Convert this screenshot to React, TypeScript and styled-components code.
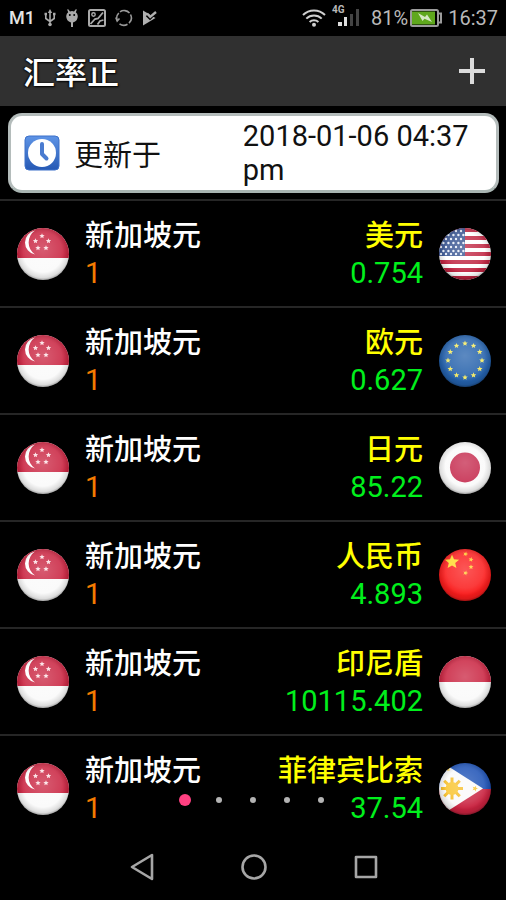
import React from "react";
import styled, { createGlobalStyle } from "styled-components";

const GlobalStyle = createGlobalStyle`
  *, *::before, *::after { box-sizing: border-box; }
  body {
    margin: 0;
    background: #000;
    color: #fff;
    font-family: Roboto, "Noto Sans CJK SC", sans-serif;
  }
`;

const Screen = styled.div`
  display: flex;
  flex-direction: column;
  min-height: 100vh;
  background: #000;
`;

const StatusBar = styled.div`
  display: flex;
  align-items: center;
  justify-content: space-between;
  height: 36px;
  padding: 0 8px 0 9px;
  font-size: 20px;
  line-height: 24px;
  color: #b9b9b9;
`;

const StatusGroup = styled.div<{ $gap: number }>`
  display: flex;
  align-items: center;
  gap: ${(p) => p.$gap}px;
`;

const Carrier = styled.span`
  font-size: 18px;
  font-weight: 500;
  color: #e4e4e4;
`;

const AppBar = styled.header`
  display: flex;
  align-items: center;
  justify-content: space-between;
  height: 70px;
  padding: 0 20px 0 23px;
  background: #303030;
`;

const Title = styled.h1`
  margin: 0 0 2px;
  font-family: "Noto Sans CJK SC", sans-serif;
  font-size: 32px;
  line-height: 48px;
  font-weight: 500;
  text-shadow: 1px 1px 2px #000, -1px 0 2px #000;
`;

const IconButton = styled.button`
  display: flex;
  align-items: center;
  justify-content: center;
  padding: 0;
  border: 0;
  background: none;
  color: #dcdcdc;
  cursor: pointer;
`;

const UpdateCard = styled.section`
  display: grid;
  grid-template-columns: 50px 2fr 3fr;
  align-items: center;
  min-height: 80px;
  margin: 7px 7px 6px 8px;
  padding: 0 0 0 13px;
  border: 3px solid #b4bcbb;
  border-bottom-color: #a9b5b2;
  border-radius: 14px;
  background: #fff;
  color: #111;
  font-size: 29px;
  line-height: 34px;
`;

const UpdateLabel = styled.span`
  font-family: "Noto Sans CJK SC", sans-serif;
`;

const Main = styled.main`
  position: relative;
  flex: 1;
`;

const RateList = styled.ul`
  margin: 0;
  padding: 0;
  list-style: none;
`;

const RateRow = styled.li`
  display: flex;
  align-items: center;
  gap: 16px;
  min-height: 107px;
  padding: 0 15px 0 17px;
  border-top: 2px solid #262626;
`;

const Amount = styled.div<{ $end?: boolean }>`
  flex: ${(p) => (p.$end ? "1 1 auto" : "0 0 auto")};
  text-align: ${(p) => (p.$end ? "right" : "left")};
`;

const Currency = styled.div<{ $color: string }>`
  margin-bottom: 2px;
  font-family: "Noto Sans CJK SC", sans-serif;
  font-size: 29px;
  line-height: 38px;
  font-weight: 500;
  color: ${(p) => p.$color};
`;

const Value = styled.div<{ $color: string }>`
  font-size: 29px;
  line-height: 39px;
  color: ${(p) => p.$color};
`;

const Pager = styled.div`
  position: absolute;
  left: 0;
  right: 0;
  bottom: 36px;
  display: flex;
  align-items: center;
  justify-content: center;
  gap: 22px;
`;

const PageDot = styled.button<{ $active?: boolean }>`
  display: flex;
  align-items: center;
  justify-content: center;
  width: 12px;
  height: 12px;
  padding: 0;
  border: 0;
  background: none;

  &::before {
    content: "";
    width: ${(p) => (p.$active ? 12 : 6)}px;
    height: ${(p) => (p.$active ? 12 : 6)}px;
    border-radius: 50%;
    background: ${(p) => (p.$active ? "#ff4081" : "#b4b4b4")};
  }
`;

const NavBar = styled.nav`
  display: flex;
  align-items: center;
  justify-content: center;
  gap: 40px;
  height: 58px;
  padding: 0 0 8px 2px;
`;

const NavButton = styled(IconButton)`
  width: 72px;
  height: 48px;
`;

type FlagCode = "sg" | "us" | "eu" | "jp" | "cn" | "id" | "ph";

function starPoints(cx: number, cy: number, r: number, turn = 0) {
  return Array.from({ length: 10 }, (_, i) => {
    const a = ((i * 36 - 90 + turn) * Math.PI) / 180;
    const d = i % 2 ? r * 0.45 : r;
    return `${(cx + d * Math.cos(a)).toFixed(2)},${(cy + d * Math.sin(a)).toFixed(2)}`;
  }).join(" ");
}

function Star({ x, y, r, fill, turn }: { x: number; y: number; r: number; fill: string; turn?: number }) {
  return <polygon points={starPoints(x, y, r, turn)} fill={fill} />;
}

const artwork: Record<FlagCode, React.ReactNode> = {
  sg: (
    <>
      <rect width="52" height="52" fill="#fafafa" />
      <rect width="52" height="30" fill="#c9223f" />
      <path d="M18 2.500A12.200 12.200 0 0 0 18 26.500A14.500 14.500 0 0 1 18 2.500Z" fill="#fff" />
      <Star x={25} y={8} r={2.8} fill="#fbdfe3" />
      <Star x={18.5} y={13} r={2.8} fill="#fbdfe3" />
      <Star x={31.5} y={13} r={2.8} fill="#fbdfe3" />
      <Star x={21} y={20} r={2.8} fill="#fbdfe3" />
      <Star x={29} y={20} r={2.8} fill="#fbdfe3" />
    </>
  ),
  us: (
    <>
      <rect width="52" height="52" fill="#fff" />
      {[0, 8, 16, 24, 32, 40, 48].map((y) => (
        <rect key={y} y={y} width="52" height="4" fill="#bf2340" />
      ))}
      <rect width="26" height="28" fill="#34518f" />
      {[3, 7, 11, 15, 19, 23, 26].map((y, r) =>
        [1, 6, 11, 16, 21].map((x) => (
          <circle key={`${x}-${y}`} cx={x + (r % 2 ? 3.4 : 1)} cy={y} r="1.200" fill="#e9eef8" />
        ))
      )}
    </>
  ),
  eu: (
    <>
      <rect width="52" height="52" fill="#2360ab" />
      {Array.from({ length: 12 }, (_, i) => {
        const a = (i * Math.PI) / 6;
        return <Star key={i} x={26 + 17 * Math.sin(a)} y={25.5 - 17 * Math.cos(a)} r={2.9} fill="#f4e95c" />;
      })}
    </>
  ),
  jp: (
    <>
      <rect width="52" height="52" fill="#fafafa" />
      <circle cx="26" cy="25.500" r="15" fill="#c4264a" />
    </>
  ),
  cn: (
    <>
      <rect width="52" height="52" fill="#fa1c1c" />
      <Star x={13} y={13} r={7.5} fill="#ffdb2b" />
      <Star x={26.5} y={5} r={2.6} fill="#ffc92b" turn={20} />
      <Star x={32} y={10.5} r={2.6} fill="#ffc92b" turn={10} />
      <Star x={32} y={18} r={2.6} fill="#ffc92b" />
      <Star x={26.5} y={24} r={2.6} fill="#ffc92b" turn={20} />
    </>
  ),
  id: (
    <>
      <rect width="52" height="52" fill="#fafafa" />
      <rect width="52" height="26" fill="#c9223f" />
    </>
  ),
  ph: (
    <>
      <rect width="52" height="26" fill="#1b50b5" />
      <rect y="26" width="52" height="26" fill="#c9223f" />
      <path d="M0 0H4L44 25.500L4 51H0Z" fill="#fafafa" />
      {Array.from({ length: 8 }, (_, i) => (
        <rect key={i} x="11.500" y="14.500" width="3" height="7" fill="#f6bd26" transform={`rotate(${i * 45} 13 25.500)`} />
      ))}
      <circle cx="13" cy="25.500" r="6.500" fill="#f9c52f" />
      <Star x={36} y={25.5} r={3} fill="#f9c52f" turn={20} />
      <Star x={9} y={6} r={2.5} fill="#f9c52f" />
    </>
  ),
};

const FlagSvg = styled.svg`
  flex: none;
  display: block;
  width: 52px;
  height: 52px;
`;

function Flag({ code, label }: { code: FlagCode; label: string }) {
  const id = React.useId();
  return (
    <FlagSvg viewBox="0 0 52 52" role="img" aria-label={label}>
      <defs>
        <clipPath id={`${id}c`}>
          <circle cx="26" cy="26" r="26" />
        </clipPath>
        <radialGradient id={`${id}s`} cx="50%" cy="47%" r="54%">
          <stop offset="0.700" stopColor="#000" stopOpacity="0" />
          <stop offset="0.900" stopColor="#000" stopOpacity="0.120" />
          <stop offset="1" stopColor="#000" stopOpacity="0.400" />
        </radialGradient>
        <radialGradient id={`${id}g`} cx="50%" cy="40%" r="50%">
          <stop offset="0" stopColor="#fff" stopOpacity="0.260" />
          <stop offset="0.700" stopColor="#fff" stopOpacity="0.140" />
          <stop offset="1" stopColor="#fff" stopOpacity="0" />
        </radialGradient>
      </defs>
      <g clipPath={`url(#${id}c)`}>
        {artwork[code]}
        <rect width="52" height="52" fill={`url(#${id}g)`} />
        <rect width="52" height="52" fill={`url(#${id}s)`} />
      </g>
    </FlagSvg>
  );
}

function ClockIcon() {
  return (
    <svg width="36" height="36" viewBox="0 0 36 36" aria-hidden="true">
      <defs>
        <linearGradient id="clock-bg" x1="0" y1="0" x2="0" y2="1">
          <stop offset="0" stopColor="#5e94e6" />
          <stop offset="1" stopColor="#2659b4" />
        </linearGradient>
      </defs>
      <rect x="1" y="1" width="34" height="34" rx="4" fill="url(#clock-bg)" stroke="#3d71c9" />
      <circle cx="18" cy="18" r="14" fill="#fff" />
      <path d="M18 9V19L22.500 23.500" fill="none" stroke="#4a7bd0" strokeWidth="4" strokeLinecap="round" strokeLinejoin="round" />
    </svg>
  );
}

function UsbIcon() {
  return (
    <svg width="12" height="18" viewBox="0 0 12 18" fill="none" stroke="#aaa" strokeWidth="1.600" aria-hidden="true">
      <path d="M6 3V16M1.800 6V9.500L6 12.500M10.200 6V9.500L6 12.500" />
      <path d="M6 0L8.200 4H3.800Z" fill="#aaa" stroke="none" />
      <circle cx="6" cy="15.500" r="1.800" fill="#aaa" stroke="none" />
      <path d="M.5 5H3M9 5H11.500" strokeWidth="2.400" />
    </svg>
  );
}

function DroidIcon() {
  return (
    <svg width="14" height="18" viewBox="0 0 14 18" aria-hidden="true">
      <path d="M3 0L5 2.400A7 7 0 0 1 9 2.400L11 0L11.800 .8L10.800 3.200Q12.500 4.500 12.800 7Q12.800 12 8 13.500V18H6V13.500Q1.200 12 1.200 7Q1.500 4.500 3.200 3.200L2.200 .8Z" fill="#aaa" />
      <circle cx="4.800" cy="6" r="1" fill="#000" />
      <circle cx="9.200" cy="6" r="1" fill="#000" />
    </svg>
  );
}

function PictureIcon() {
  return (
    <svg width="18" height="18" viewBox="0 0 18 18" fill="none" stroke="#aaa" aria-hidden="true">
      <rect x="1" y="1" width="16" height="16" rx="1.500" strokeWidth="2" />
      <circle cx="5.500" cy="5.500" r="1.700" strokeWidth="1.400" />
      <path d="M2.500 15L7 10L10 9.500L15 3.500M9.500 15.500L12 12L15.500 11" strokeWidth="1.800" />
    </svg>
  );
}

function SyncIcon() {
  return (
    <svg width="18" height="18" viewBox="0 0 18 18" fill="none" stroke="#999" strokeWidth="1.600" aria-hidden="true">
      <path d="M5 2.800A7.300 7.300 0 0 1 14.500 4M15.500 5.500A7.300 7.300 0 0 1 14 14.200M12.500 15.300A7.300 7.300 0 0 1 4.500 14.800M2.200 11.500A7.300 7.300 0 0 1 3.800 4" />
      <path d="M.8 8.500L2.200 12L4.500 9.500" />
    </svg>
  );
}

function PlayIcon() {
  return (
    <svg width="15" height="16" viewBox="0 0 15 16" aria-hidden="true">
      <path d="M1 .5L13.500 8L1 15.500Z" fill="#b0b0b0" />
      <path d="M5 5L8 8L14 2" fill="none" stroke="#000" strokeWidth="3.200" />
      <path d="M5 3.500L8.200 6.800L14 2" fill="none" stroke="#b0b0b0" strokeWidth="2.400" />
    </svg>
  );
}

function WifiIcon() {
  return (
    <svg width="24" height="18" viewBox="0 0 24 18" fill="none" stroke="#d0d0d0" strokeWidth="2" aria-hidden="true">
      <path d="M1 6A15.500 15.500 0 0 1 23 6M4.300 9.600A11 11 0 0 1 19.700 9.600M7.600 13A6.500 6.500 0 0 1 16.400 13" />
      <circle cx="12" cy="15.800" r="2" fill="#d0d0d0" stroke="none" />
    </svg>
  );
}

const Signal = styled.span`
  display: flex;
  align-items: flex-end;
  width: 27px;
  height: 22px;
  margin: 0 6px 4px 0;
`;

const Network = styled.span`
  align-self: flex-start;
  width: 6px;
  font-size: 10px;
  line-height: 10px;
  font-weight: 700;
  white-space: nowrap;
`;

function SignalIcon() {
  return (
    <Signal>
      <Network>4G</Network>
      <svg width="21" height="18" viewBox="0 0 21 18" aria-hidden="true">
        <rect x="0" y="13" width="4" height="4" fill="#ddd" />
        <rect x="6" y="8" width="3" height="9" fill="#ddd" />
        <rect x="12" y="5" width="3" height="12" fill="#444" />
        <rect x="18" y="0" width="3" height="17" fill="#444" />
      </svg>
    </Signal>
  );
}

function BatteryIcon() {
  return (
    <svg width="32" height="18" viewBox="0 0 32 18" aria-hidden="true">
      <rect x="1" y="1" width="27" height="16" rx="1.500" fill="#000" stroke="#9c9c9c" strokeWidth="2" />
      <rect x="2" y="2.500" width="23" height="13" fill="#5fa81d" />
      <path d="M28 4.500H31V13.500H28" fill="none" stroke="#9c9c9c" strokeWidth="2" />
      <path d="M8 4L15 8L17 5.500L22 13L14.500 9.800L12.500 12Z" fill="#d5e8c4" />
    </svg>
  );
}

const rates: { code: FlagCode; name: string; value: string }[] = [
  { code: "us", name: "美元", value: "0.754" },
  { code: "eu", name: "欧元", value: "0.627" },
  { code: "jp", name: "日元", value: "85.22" },
  { code: "cn", name: "人民币", value: "4.893" },
  { code: "id", name: "印尼盾", value: "10115.402" },
  { code: "ph", name: "菲律宾比索", value: "37.54" },
];

export default function App() {
  return (
    <Screen lang="zh-CN">
      <GlobalStyle />
      <StatusBar>
        <StatusGroup $gap={9}>
          <Carrier>M1</Carrier>
          <UsbIcon />
          <DroidIcon />
          <PictureIcon />
          <SyncIcon />
          <PlayIcon />
        </StatusGroup>
        <StatusGroup $gap={6}>
          <WifiIcon />
          <SignalIcon />
          <StatusGroup $gap={2}>
            <span>81%</span>
            <BatteryIcon />
          </StatusGroup>
          <span>16:37</span>
        </StatusGroup>
      </StatusBar>

      <AppBar>
        <Title>汇率正</Title>
        <IconButton type="button" aria-label="添加">
          <svg width="28" height="28" viewBox="0 0 28 28" stroke="currentColor" strokeWidth="4" aria-hidden="true">
            <path d="M14 1V27M1 14H27" />
          </svg>
        </IconButton>
      </AppBar>

      <UpdateCard>
        <ClockIcon />
        <UpdateLabel>更新于</UpdateLabel>
        <time dateTime="2018-01-06T16:37">2018-01-06 04:37 pm</time>
      </UpdateCard>

      <Main>
        <RateList>
          {rates.map((rate) => (
            <RateRow key={rate.code}>
              <Flag code="sg" label="新加坡" />
              <Amount>
                <Currency $color="#fff">新加坡元</Currency>
                <Value $color="#f57c00">1</Value>
              </Amount>
              <Amount $end>
                <Currency $color="#ffff00">{rate.name}</Currency>
                <Value $color="#00f01c">{rate.value}</Value>
              </Amount>
              <Flag code={rate.code} label={rate.name} />
            </RateRow>
          ))}
        </RateList>
        <Pager>
          {[1, 2, 3, 4, 5].map((page) => (
            <PageDot key={page} type="button" $active={page === 1} aria-label={`第${page}页`} />
          ))}
        </Pager>
      </Main>

      <NavBar>
        <NavButton type="button" aria-label="返回">
          <svg width="28" height="28" viewBox="0 0 28 28" fill="none" stroke="#a6a6a6" strokeWidth="2.600" strokeLinejoin="round" aria-hidden="true">
            <path d="M24 2V26L4 14Z" />
          </svg>
        </NavButton>
        <NavButton type="button" aria-label="主页">
          <svg width="28" height="28" viewBox="0 0 28 28" fill="none" stroke="#a6a6a6" strokeWidth="2.600" aria-hidden="true">
            <circle cx="14" cy="14" r="11.500" />
          </svg>
        </NavButton>
        <NavButton type="button" aria-label="最近任务">
          <svg width="28" height="28" viewBox="0 0 28 28" fill="none" stroke="#a6a6a6" strokeWidth="2.600" strokeLinejoin="round" aria-hidden="true">
            <rect x="4" y="4" width="20" height="20" />
          </svg>
        </NavButton>
      </NavBar>
    </Screen>
  );
}
